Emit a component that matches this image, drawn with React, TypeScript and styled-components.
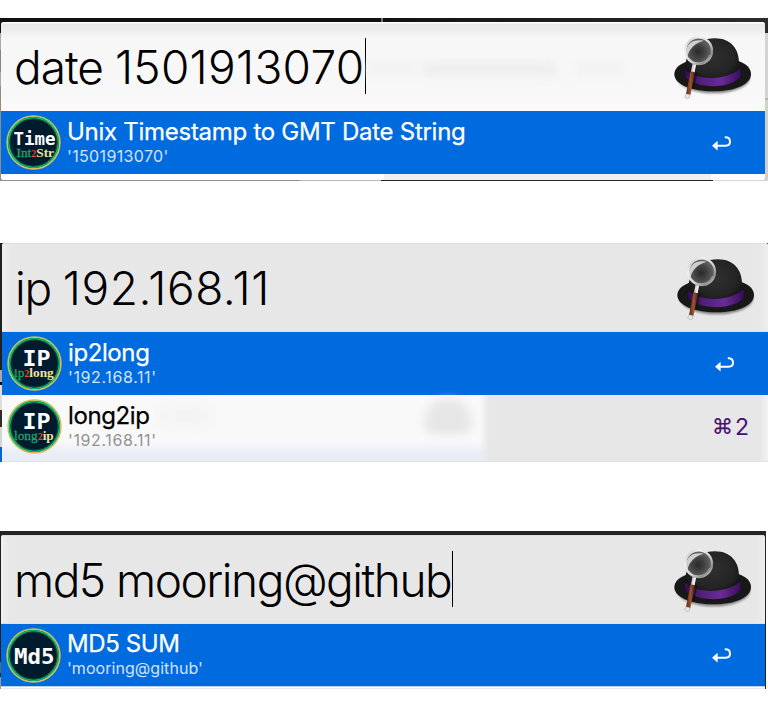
import React from "react";
import styled, { createGlobalStyle, css } from "styled-components";

const GlobalStyle = createGlobalStyle`
  * { box-sizing: border-box; }
  body {
    margin: 0;
    background: #fff;
    font-family: Inter, "Liberation Sans", sans-serif;
  }
`;

const Page = styled.main`
  display: flex;
  flex-direction: column;
  width: 768px;
  height: 710px;
  padding-top: 18px;
  overflow: hidden;
  background: #fff;
`;

type Variant = "date" | "ip" | "md5";

const backdrops = {
  date: css`
    width: 768px;
    height: 163px;
    margin-bottom: 62px;
    padding: 4px 3px 0 1px;
    background:
      linear-gradient(90deg, #8f8f8f 0 300px, #b9b9b9 300px 381px, #252525 381px 713px, #d6d6d6 713px) 0 162px / 100% 1px no-repeat,
      linear-gradient(90deg, transparent 381px, #777 381px 383px, transparent 383px) 0 0 / 100% 4px no-repeat,
      linear-gradient(90deg, #111 0 375px, #2c2c2c) 0 0 / 100% 5px no-repeat,
      linear-gradient(#111 0 15px, #aaa 15px 32px, #858585 32px 54px, #aaa 54px 68px, #948c82 68px) 0 0 / 8px 100% no-repeat,
      linear-gradient(#2c2c2c 0 15px, #d2d4d4 15px 80px, #b8b8b8 80px 82px, #d2cfcd 82px) 100% 0 / 8px 100% no-repeat;
  `,
  ip: css`
    width: 768px;
    height: 219px;
    margin-bottom: 69px;
    padding-left: 2px;
    background: linear-gradient(#202020 0 127px, #aaa 127px 139px, #111 139px 142px, #ddd 142px 167px, #332b25 167px 184px, #d6d6d6 184px 204px, #0665d6 204px);
  `,
  md5: css`
    width: 766px;
    height: 158px;
    padding: 4px 1px 0 1px;
    background:
      linear-gradient(#202020 0 131px, #666 131px 142px, #222 142px 146px, #999 146px) 0 0 / 1px 100% no-repeat,
      #242424;
  `,
};

const Backdrop = styled.section<{ $variant: Variant }>`
  flex: none;
  ${(p) => backdrops[p.$variant]}
`;

const Launcher = styled.div<{ $variant: Variant }>`
  display: flex;
  flex-direction: column;
  height: ${(p) => (p.$variant === "date" ? "158px" : "100%")};
  overflow: hidden;
  border-radius: ${(p) => (p.$variant === "date" ? "3px" : "3px 3px 0 0")};
  background: #fafafa;
`;

const SearchBar = styled.header<{ $variant: Variant }>`
  position: relative;
  display: flex;
  flex: none;
  align-items: center;
  height: 89px;
  padding: 0 12px 0 13px;
  background: ${(p) =>
    p.$variant === "date"
      ? "linear-gradient(#fff 0 1px, #e8e8e8 2px, #ececec 7px, #f7f7f7 17px, #f8f8f8 76px, #fbfbfb)"
      : "linear-gradient(90deg, #efefef, #e7e7e7 9px calc(100% - 10px), #ededed)"};
  box-shadow: ${(p) =>
    p.$variant === "date" ? "none" : "inset 0 1px #dedede, inset 0 -1px #e2e2e2"};
`;

const Query = styled.div`
  color: #000;
  font-size: 46px;
  font-weight: 300;
  line-height: 56px;
  white-space: pre;
`;

const Tracked = styled.span<{ $tracking: number }>`
  letter-spacing: ${(p) => p.$tracking}px;
`;

const Caret = styled.i<{ $wide: boolean }>`
  width: ${(p) => (p.$wide ? 1.5 : 1)}px;
  height: 56px;
  margin: -1px 0 0 ${(p) => (p.$wide ? 0.5 : 1)}px;
  background: #000;
`;

const HatSlot = styled.div`
  display: flex;
  height: 66px;
  margin: 2px 0 0 auto;
  svg { display: block; }
`;

const GhostText = styled.div`
  position: absolute;
  top: 39px;
  left: 366px;
  width: 258px;
  height: 16px;
  background: linear-gradient(90deg, #f1f1f1 0 45px, transparent 52px, #ebebeb 60px 185px, transparent 195px 204px, #f1f1f1 212px);
  filter: blur(5px);
  opacity: 0.75;
`;

const Row = styled.div<{ $selected?: boolean; $variant: Variant }>`
  position: relative;
  display: flex;
  flex: none;
  align-items: center;
  height: ${(p) => (!p.$selected ? 67 : p.$variant === "md5" ? 62 : 63)}px;
  padding: 0 19px ${(p) => (p.$selected ? 0 : 3)}px 5px;
  color: ${(p) => (p.$selected ? "#fff" : "#000")};
  background: ${(p) =>
    p.$selected
      ? "#006adf"
      : "linear-gradient(90deg, transparent 478px, #e7e7e7 487px calc(100% - 8px), #f2f2f2), linear-gradient(#f9f9fa 0 46px, #e8edf6 58px)"};
  border-bottom: ${(p) => (p.$selected ? "none" : "1px solid #e2e2e2")};
`;

const GhostHat = styled.div`
  position: absolute;
  top: 4px;
  left: 421px;
  width: 50px;
  height: 36px;
  border-radius: 45% 45% 30% 30%;
  background: radial-gradient(ellipse at 50% 45%, #e6e6e6 0 50%, transparent 70%), linear-gradient(transparent 45%, #e9e9e9 60%);
  filter: blur(4px);
`;

const GhostWord = styled.div`
  position: absolute;
  top: 9px;
  left: 156px;
  width: 54px;
  height: 24px;
  background: #f1f1f1;
  filter: blur(6px);
  opacity: 0.6;
`;

const Labels = styled.div`
  position: relative;
  display: flex;
  flex-direction: column;
  margin: 0 0 2px 6px;
`;

const Title = styled.span<{ $tracking: number }>`
  height: 28px;
  font-size: 24px;
  line-height: 28px;
  letter-spacing: ${(p) => p.$tracking}px;
  -webkit-text-stroke: 0.25px currentColor;
  white-space: nowrap;
`;

const Subtitle = styled.span<{ $muted: boolean; $tracking: number }>`
  height: 20px;
  color: ${(p) => (p.$muted ? "#929292" : "#d4e3fb")};
  font-size: 16px;
  line-height: 20px;
  letter-spacing: ${(p) => p.$tracking}px;
  white-space: nowrap;
`;

const Shortcut = styled.div`
  position: relative;
  display: flex;
  align-items: center;
  gap: 2px;
  margin: 1px 0 0 auto;
  color: #48106f;
  font-size: 23px;
  line-height: 28px;
`;

const CommandKey = styled.span`
  font-family: "DejaVu Sans", sans-serif;
  font-size: 21px;
  -webkit-text-stroke: 0.2px #48106f;
`;

const ReturnKey = styled.svg`
  display: block;
  margin: 1px 14px 0 auto;
`;

const Footer = styled.div<{ $variant: Variant }>`
  flex: 1;
  background: ${(p) =>
    p.$variant === "date"
      ? "linear-gradient(90deg, #fff 0 383px, #f1f1f1 383px 710px, #fcfcfc 710px)"
      : "linear-gradient(#b9d3f3 0 1px, #fff 1px 2px, #ececec 2px)"};
`;

const Hat = () => (
  <svg width="80" height="66" viewBox="24 24 240 198" aria-hidden="true">
    <defs>
      <radialGradient id="crown" cx="50%" cy="40%" r="60%">
        <stop offset="0" stopColor="#303030" />
        <stop offset="0.65" stopColor="#242424" />
        <stop offset="1" stopColor="#0e0e0e" />
      </radialGradient>
      <linearGradient id="band" x1="0" x2="1">
        <stop offset="0" stopColor="#350b55" />
        <stop offset="0.3" stopColor="#51217a" />
        <stop offset="0.65" stopColor="#6a2b98" />
        <stop offset="1" stopColor="#3a0c5d" />
      </linearGradient>
      <linearGradient id="rim" x1="0" y1="0" x2="1" y2="1">
        <stop offset="0" stopColor="#b5b5b5" />
        <stop offset="0.25" stopColor="#f2f2f2" />
        <stop offset="0.55" stopColor="#d8d8d8" />
        <stop offset="0.8" stopColor="#8d8d8d" />
        <stop offset="1" stopColor="#e4e4e4" />
      </linearGradient>
      <radialGradient id="glass" cx="48%" cy="54%" r="55%">
        <stop offset="0" stopColor="#2a2a2a" />
        <stop offset="0.4" stopColor="#404040" />
        <stop offset="1" stopColor="#6c6c6c" />
      </radialGradient>
      <linearGradient id="wood" x1="0" x2="1">
        <stop offset="0" stopColor="#5c2810" />
        <stop offset="0.5" stopColor="#99542d" />
        <stop offset="1" stopColor="#53240f" />
      </linearGradient>
      <filter id="soft" x="-20%" y="-20%" width="140%" height="140%">
        <feGaussianBlur stdDeviation="3" />
      </filter>
    </defs>
    <ellipse cx="146" cy="152" rx="109" ry="47" fill="#000" opacity="0.45" filter="url(#soft)" />
    <path d="M28 142C28 126 40 114 62 105L222 103C243 110 258 124 258 141C258 172 212 193 144 193C77 193 28 172 28 142Z" fill="#181818" />
    <path d="M60 122C64 84 81 34 150 34C199 34 221 68 222 104L226 124C228 143 218 158 199 165C161 179 94 174 68 157C60 150 58 136 60 122Z" fill="url(#crown)" />
    <path d="M60 126C90 162 188 162 226 124L227 148C202 187 93 187 60 149Z" fill="url(#band)" />
    <path d="M92 135L80 184" stroke="#13091b" strokeWidth="13" opacity="0.55" />
    <circle cx="101" cy="71" r="40" fill="url(#glass)" stroke="url(#rim)" strokeWidth="7" />
    <path d="M63 76C65 48 84 35 116 41C92 47 72 64 67 91C64 86 63 82 63 76Z" fill="#dcdcdc" opacity="0.9" />
    <path d="M73 95C89 115 122 111 134 84" fill="none" stroke="#e1e1e1" strokeWidth="3" opacity="0.45" />
    <path d="M88 112L83 137" stroke="#d8d8d8" strokeWidth="11" />
    <path d="M90 113L86 136" stroke="#fff" strokeWidth="3" />
    <path d="M77 133L90 136L76 205L63 201Z" fill="url(#wood)" />
    <path d="M63 200L75 203L73 213Q65 218 59 210Z" fill="#e4e4e4" stroke="#888" strokeWidth="1" />
  </svg>
);

const ReturnArrow = () => (
  <ReturnKey width="20" height="15" viewBox="0 0 20 15" aria-label="Return">
    <path d="M0 9.7L5.6 4.8V14.4Z" fill="#fff" />
    <path d="M4 9.8H13.5Q18 9.8 18 5.6Q18 1.5 14 1.2L12.8 1.2" fill="none" stroke="#fff" strokeWidth="2" strokeLinejoin="round" />
  </ReturnKey>
);

interface BadgeText {
  head: string;
  headX: number;
  headY: number;
  headWidth: number;
  headSize: number;
  parts?: [string, string, string];
  partsX?: number;
  partsY?: number;
}

const BadgeSvg = styled.svg`
  display: block;
  position: relative;
  flex: none;
`;

const Badge = ({ text }: { text: BadgeText }) => (
  <BadgeSvg width="55" height="55" viewBox="0 0 55 55">
    <defs>
      <linearGradient id="ring" x1="0" y1="0" x2="1" y2="1">
        <stop offset="0" stopColor="#e1b653" />
        <stop offset="0.35" stopColor="#a6cb63" />
        <stop offset="0.7" stopColor="#dfb75b" />
        <stop offset="1" stopColor="#c4c869" />
      </linearGradient>
    </defs>
    <circle cx="27.5" cy="27.5" r="26.3" fill="#001b2e" stroke="url(#ring)" strokeWidth="1.8" />
    <circle cx="27.5" cy="27.5" r="24.7" fill="none" stroke="#08bd72" strokeWidth="1.6" />
    <circle cx="27.5" cy="27.5" r="23.5" fill="none" stroke="#04533e" strokeWidth="0.9" />
    <text x={text.headX} y={text.headY} textLength={text.headWidth} lengthAdjust="spacingAndGlyphs" fill="#fff" fontFamily="DejaVu Sans Mono, monospace" fontWeight="700" fontSize={text.headSize}>
      {text.head}
    </text>
    {text.parts && (
      <text x={text.partsX} y={text.partsY} fontFamily="Liberation Serif, serif" fontWeight="700" fontSize="13.3">
        <tspan fill="#20a566" fontWeight="400" stroke="#20a566" strokeWidth="0.3">{text.parts[0]}</tspan>
        <tspan fill="#e0482c" fontSize="10">{text.parts[1]}</tspan>
        <tspan fill="#f1e39c">{text.parts[2]}</tspan>
      </text>
    )}
  </BadgeSvg>
);

interface Result {
  title: string;
  titleTracking: number;
  subtitle: string;
  subtitleTracking: number;
  badge: BadgeText;
  selected?: boolean;
}

interface Panel {
  variant: Variant;
  keyword: string;
  keywordTracking: number;
  argument: string;
  argumentTracking: number;
  caret?: boolean;
  results: Result[];
}

const panels: Panel[] = [
  {
    variant: "date",
    keyword: "date ",
    keywordTracking: -1,
    argument: "1501913070",
    argumentTracking: 0.3,
    caret: true,
    results: [
      {
        title: "Unix Timestamp to GMT Date String",
        titleTracking: -0.28,
        subtitle: "'1501913070'",
        subtitleTracking: 0.35,
        selected: true,
        badge: { head: "Time", headX: 7.5, headY: 29.5, headWidth: 42, headSize: 18, parts: ["Int", "2", "Str"], partsX: 10.5, partsY: 42 },
      },
    ],
  },
  {
    variant: "ip",
    keyword: "ip ",
    keywordTracking: -1.2,
    argument: "192.168.11",
    argumentTracking: 0.6,
    results: [
      {
        title: "ip2long",
        titleTracking: -0.4,
        subtitle: "'192.168.11'",
        subtitleTracking: 0.62,
        selected: true,
        badge: { head: "IP", headX: 15.5, headY: 29.5, headWidth: 28, headSize: 22, parts: ["ip", "2", "long"], partsX: 7, partsY: 40.5 },
      },
      {
        title: "long2ip",
        titleTracking: -0.4,
        subtitle: "'192.168.11'",
        subtitleTracking: 0.62,
        badge: { head: "IP", headX: 15.5, headY: 29.5, headWidth: 28, headSize: 22, parts: ["long", "2", "ip"], partsX: 7, partsY: 40.5 },
      },
    ],
  },
  {
    variant: "md5",
    keyword: "md5 ",
    keywordTracking: -1.5,
    argument: "mooring@github",
    argumentTracking: -1.48,
    caret: true,
    results: [
      {
        title: "MD5 SUM",
        titleTracking: -0.4,
        subtitle: "'mooring@github'",
        subtitleTracking: 0.05,
        selected: true,
        badge: { head: "Md5", headX: 8, headY: 36, headWidth: 40.5, headSize: 21.5 },
      },
    ],
  },
];

const ResultRow = ({ result, variant }: { result: Result; variant: Variant }) => (
  <Row $selected={result.selected} $variant={variant}>
    {!result.selected && (
      <>
        <GhostWord />
        <GhostHat />
      </>
    )}
    <Badge text={result.badge} />
    <Labels>
      <Title $tracking={result.titleTracking}>{result.title}</Title>
      <Subtitle $muted={!result.selected} $tracking={result.subtitleTracking}>{result.subtitle}</Subtitle>
    </Labels>
    {result.selected ? (
      <ReturnArrow />
    ) : (
      <Shortcut>
        <CommandKey>⌘</CommandKey>
        <span>2</span>
      </Shortcut>
    )}
  </Row>
);

export default function App() {
  return (
    <Page>
      <GlobalStyle />
      {panels.map((panel) => (
        <Backdrop key={panel.variant} $variant={panel.variant}>
          <Launcher $variant={panel.variant}>
            <SearchBar $variant={panel.variant}>
              {panel.variant === "date" && <GhostText />}
              <Query>
                <Tracked $tracking={panel.keywordTracking}>{panel.keyword}</Tracked>
                <Tracked $tracking={panel.argumentTracking}>{panel.argument}</Tracked>
              </Query>
              {panel.caret && <Caret $wide={panel.variant === "date"} />}
              <HatSlot><Hat /></HatSlot>
            </SearchBar>
            {panel.results.map((result) => (
              <ResultRow key={result.title} result={result} variant={panel.variant} />
            ))}
            {panel.variant !== "ip" && <Footer $variant={panel.variant} />}
          </Launcher>
        </Backdrop>
      ))}
    </Page>
  );
}
